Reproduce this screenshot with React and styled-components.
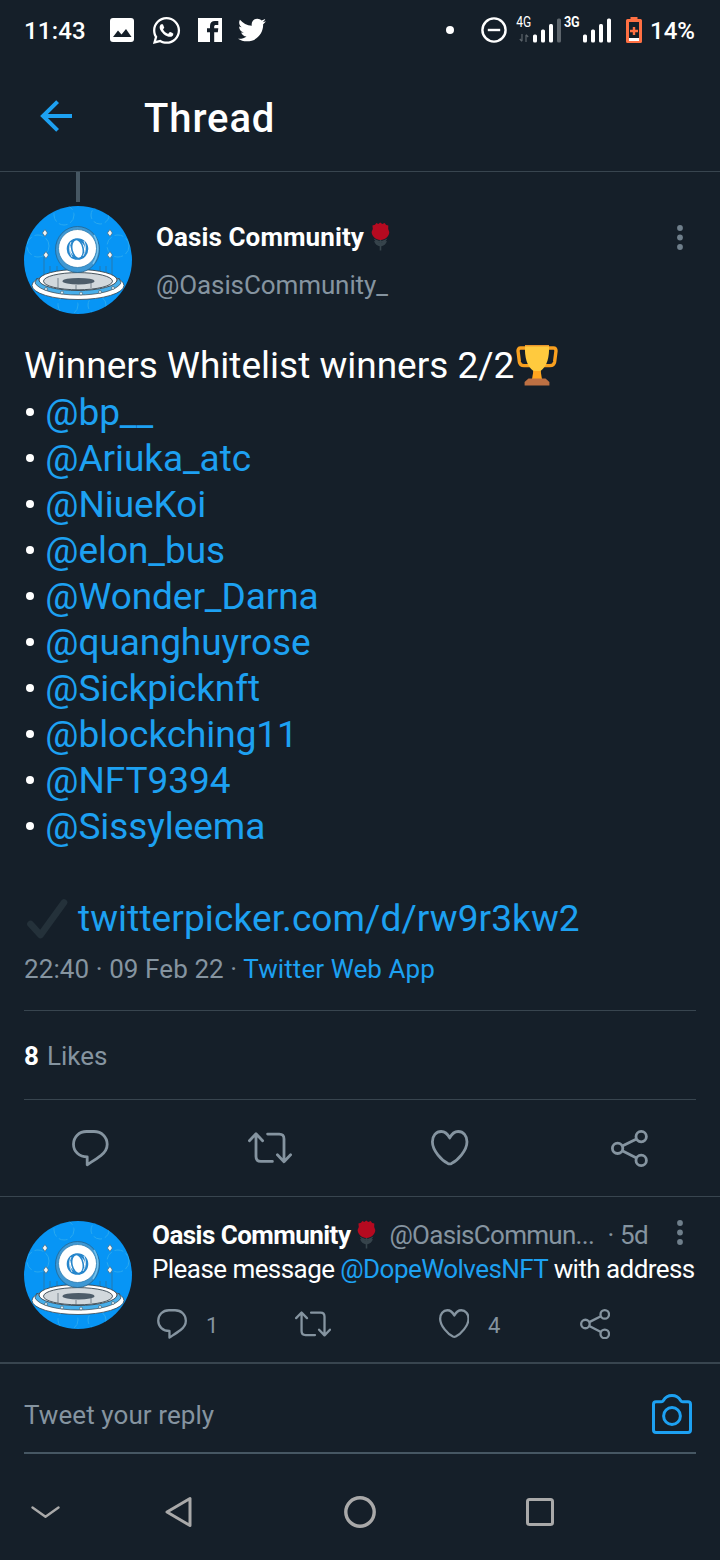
import React from 'react';
import styled, { createGlobalStyle } from 'styled-components';
import { FaTwitter, FaWhatsapp } from 'react-icons/fa';

const GlobalStyle = createGlobalStyle`
  :root {
    --bg: #151f29;
    --white: #ffffff;
    --slate: #8594a0;
    --blue: #1da1f2;
    --line: #38454f;
  }

  * {
    box-sizing: border-box;
  }

  body {
    margin: 0;
    background: var(--bg);
    color: var(--white);
    font-family: Roboto, 'Noto Sans', sans-serif;
  }

  svg {
    display: block;
    flex-shrink: 0;
  }
`;

const Screen = styled.div`
  display: flex;
  flex-direction: column;
  width: 720px;
  height: 1560px;
  overflow: hidden;
`;

const StatusBar = styled.header`
  display: flex;
  align-items: center;
  height: 60px;
  padding: 0 24px;
  font-size: 24px;
  font-weight: 500;

  .clock {
    width: 84px;
    padding-top: 1px;
    letter-spacing: 0.2px;
  }

  .battery {
    margin: 0 8px 0 15px;
  }

  .percent {
    width: 46px;
    padding-top: 1px;
    white-space: nowrap;
  }
`;

const StatusApps = styled.div`
  display: flex;
  align-items: center;
  flex: 1;

  svg + svg {
    margin-left: 16px;
  }

  svg:nth-child(2) {
    margin-left: 15px;
  }
`;

const Dot = styled.span`
  width: 8px;
  height: 8px;
  margin-right: 27px;
  border-radius: 50%;
  background: var(--white);
`;

const Network = styled.div`
  display: flex;
  height: 28px;
  margin-left: ${({ $gap }) => $gap}px;

  .label {
    display: flex;
    flex-direction: column;
    justify-content: space-between;
    align-items: center;
    width: ${({ $bold }) => ($bold ? 20 : 18)}px;
    padding-bottom: 2px;
  }

  .label span {
    margin: -1px ${({ $bold }) => ($bold ? 2 : 0)}px 0 0;
    font-size: 14px;
    line-height: 14px;
    font-weight: ${({ $bold }) => ($bold ? 700 : 400)};
    transform: scaleX(${({ $bold }) => ($bold ? 0.9 : 0.86)});
  }
`;

const TopBar = styled.div`
  display: flex;
  align-items: center;
  height: 112px;
  padding: 4px 40px 0;
  border-bottom: 1px solid var(--line);

  h1 {
    margin: 2px 0 0 72px;
    font-size: 40px;
    font-weight: 500;
    line-height: 48px;
    letter-spacing: 0.9px;
  }

  svg {
    margin-top: -4px;
  }
`;

const Connector = styled.div`
  width: 4px;
  height: 30px;
  margin-left: 76px;
  background: #465763;
`;

const Author = styled.div`
  display: flex;
  height: 108px;
  margin: 4px 24px 0;

  .names {
    flex: 1;
    padding: 15px 0 0 24px;
  }

  .more {
    margin: 19px 13px 0 0;
  }
`;

const Name = styled.div`
  display: flex;
  align-items: center;
  color: var(--white);
  font-size: 26px;
  font-weight: 700;
  line-height: 32px;
  letter-spacing: ${({ $spacing }) => $spacing || 0}px;
  white-space: nowrap;
`;

const Handle = styled.div`
  margin-top: 16px;
  color: var(--slate);
  font-size: 26px;
  line-height: 32px;
  letter-spacing: -0.1px;
`;

const Tweet = styled.div`
  margin: 29px 24px 0;
  font-size: 37px;
  line-height: 46px;

  .title {
    display: flex;
    height: 47px;
  }

  ul {
    margin: 0;
    padding: 0;
    list-style: none;
  }

  li {
    display: flex;
    align-items: center;
    height: 46px;
    letter-spacing: -0.07px;
  }

  li::before {
    content: '';
    width: 8px;
    height: 8px;
    margin: -3px 11.3px 0 2px;
    border-radius: 50%;
    background: var(--white);
  }

  .picker {
    display: flex;
    align-items: center;
    gap: 9px;
    height: 46px;
    margin-top: 46px;
    letter-spacing: 0.1px;
  }
`;

const Link = styled.a`
  color: var(--blue);
  text-decoration: none;
`;

const Meta = styled.div`
  height: 61px;
  margin: 8px 24px 0;
  padding-top: 3px;
  border-bottom: 1px solid var(--line);
  color: var(--slate);
  font-size: 26px;
  line-height: 32px;
  letter-spacing: 0.09px;
`;

const Likes = styled.div`
  height: 89px;
  margin: 0 24px;
  border-bottom: 1px solid var(--line);
  color: var(--slate);
  font-size: 26px;
  line-height: 90px;

  b {
    margin-right: 8px;
    color: var(--white);
  }
`;

const Actions = styled.div`
  display: grid;
  grid-template-columns: repeat(4, 1fr);
  place-items: center;
  height: 97px;
  border-bottom: 1px solid var(--line);
  color: var(--slate);

  svg:last-child {
    margin-right: 2px;
  }
`;

const Reply = styled.article`
  display: flex;
  height: 167px;
  padding: 24px 24px 0;
  border-bottom: 2px solid var(--line);

  .content {
    flex: 1;
    min-width: 0;
    padding-left: 20px;
  }

  .head {
    display: flex;
    height: 30px;
    margin-top: -1px;
    color: var(--slate);
    font-size: 26px;
    line-height: 30px;
    white-space: nowrap;
  }

  .user {
    width: 218px;
    margin-left: 13px;
    letter-spacing: -0.7px;
  }

  .time {
    letter-spacing: -0.4px;
  }

  .more {
    margin: 0 13px 0 auto;
  }

  p {
    margin: 3px 0 0;
    font-size: 26px;
    line-height: 32px;
    white-space: nowrap;
    letter-spacing: -0.56px;
  }
`;

const ReplyActions = styled.div`
  display: flex;
  margin-top: 20px;
  padding-left: 1px;
  color: var(--slate);
  font-size: 22px;
`;

const ReplyAction = styled.div`
  display: flex;
  align-items: center;
  flex: 0 0 141px;
  height: 38px;

  .icon {
    display: flex;
    justify-content: center;
    width: 38px;
    margin-right: 15px;
  }

  .count {
    padding-top: 2px;
  }
`;

const Composer = styled.div`
  display: flex;
  justify-content: space-between;
  align-items: center;
  height: 90px;
  margin: 0 24px;
  border-bottom: 2px solid #465763;
  color: var(--slate);
  font-size: 26px;
  letter-spacing: 0.08px;

  span {
    padding-top: 13px;
  }

  svg {
    margin: 11px 4px 0 0;
  }
`;

const NavBar = styled.nav`
  display: grid;
  grid-template-columns: 90px repeat(3, 180px) 90px;
  place-items: center;
  flex: 1;
  padding-top: 10px;
  color: #a9a9a9;
`;

const Svg = ({ w, h, box, stroke = 2.8, children, ...rest }) => (
  <svg
    width={w}
    height={h}
    viewBox={box || `0 0 ${w} ${h}`}
    fill="none"
    stroke="currentColor"
    strokeWidth={stroke}
    {...rest}>
    {children}
  </svg>
);

const CommentIcon = ({ size = 1 }) => (
  <Svg w={37 * size} h={37 * size} box="0 0 37 37" strokeLinejoin="round">
    <path d="M14.5 1.5H22C29.6 1.5 35.2 7 35.2 14.3C35.2 19.5 32.8 22.6 28.8 25.6C24.4 28.9 19.4 32 15.2 34.8V26.8C7.2 26.8 1.5 21.5 1.5 14.3C1.5 7 7 1.5 14.5 1.5Z" />
  </Svg>
);

const RetweetIcon = ({ size = 1 }) => (
  <Svg w={44 * size} h={32 * size} box="0 0 44 32" strokeLinecap="round" strokeLinejoin="round">
    <path d="M1.4 8.7L8 1.8L14.6 8.7M8 2V24.5Q8 29.4 12.8 29.4H24.4" />
    <path d="M29.4 22.8L36 29.7L42.6 22.8M36 29.5V7Q36 2.1 31.2 2.1H19.6" />
  </Svg>
);

const HeartIcon = ({ size = 1 }) => (
  <Svg w={37.4 * size} h={35.4 * size} box="0 0 37.4 35.4" strokeLinejoin="round">
    <path d="M18.7 8C16.6 3.8 13.6 1.5 10.2 1.5C5 1.5 1.4 6 1.4 11.8C1.4 20.6 10.8 30.6 17 33.6Q18.7 34.3 20.4 33.6C26.6 30.6 36 20.6 36 11.8C36 6 32.4 1.5 27.2 1.5C23.8 1.5 20.8 3.8 18.7 8Z" />
  </Svg>
);

const ShareIcon = ({ size = 1 }) => (
  <Svg w={37 * size} h={37 * size} box="0 0 37 37">
    <circle cx="6.6" cy="18.3" r="5.2" />
    <circle cx="30.2" cy="6.6" r="5.2" />
    <circle cx="30.2" cy="30.4" r="5.2" />
    <path d="M11.3 16L25.5 8.9M11.3 20.7L25.5 28" />
  </Svg>
);

const MoreIcon = () => (
  <Svg w={6} h={26} stroke={0} className="more">
    {[3, 12.5, 22].map(cy => (
      <circle key={cy} cx="3" cy={cy} r="2.9" fill="#6f7f8b" />
    ))}
  </Svg>
);

const RoseSvg = styled.svg`
  margin: -1px 0 0 7px;
`;

const Rose = () => (
  <RoseSvg width="19" height="29" viewBox="0 0 19 29">
    <path d="M8.7 17H10.3V28.5H8.7ZM9.5 24.5C6 24 4 22 3 19L9.5 20.5L16 19C15 22 13 24 9.5 24.5ZM2.5 16.5L9.5 19.5L16.5 16.5L14 20H5Z" fill="#36434b" />
    <path d="M1.4 3.4L4 2.8L5.4 1L7.3 2L9.2 0.4L11.3 2L13.6 1L15.2 3L17.3 3.6L17.2 7L18.3 10C18.2 14 14.5 18 9.5 18S0.8 14 0.6 10L1.8 7Z" fill="#b50a20" />
  </RoseSvg>
);

const TrophySvg = styled.svg`
  margin: 1px 0 0 2px;
`;

const Trophy = () => (
  <TrophySvg width="42" height="42" viewBox="0 0 42 42">
    <path d="M10 4H4.5Q2 4 2 7L3.4 18Q4 21.6 8 21.6H14M32 4H37.5Q40 4 40 7L38.6 18Q38 21.6 34 21.6H28" fill="none" stroke="#f9a01f" strokeWidth="3.4" />
    <path d="M9 1H33C33.6 14 31 22 24.6 27V35H17.4V27C11 22 8.4 14 9 1Z" fill="#ffca3e" />
    <path d="M17.4 27H24.6L26 35H16Z" fill="#ffa51f" />
    <path d="M9 1H33V2.4H9Z" fill="#e9962c" />
    <path d="M12.5 34.5H29.5L33.4 38V41.5H8.6V38Z" fill="#bd7043" />
  </TrophySvg>
);

const Check = () => (
  <svg width="45" height="42" viewBox="0 0 45 42">
    <path d="M6.5 26L16.5 37L40 4.5" fill="none" stroke="#24313a" strokeWidth="6.6" strokeLinecap="round" strokeLinejoin="round" />
  </svg>
);

const Sparkle = ({ x, y }) => (
  <path d={`M${x} ${y - 3.4}L${x + 2.4} ${y}L${x} ${y + 3.4}L${x - 2.6} ${y}Z`} fill="#eef5f8" stroke="#46555f" strokeWidth="0.6" />
);

const Avatar = () => (
  <svg width="108" height="108" viewBox="0 0 108 108">
    <defs>
      <clipPath id="avatar-clip">
        <circle cx="54" cy="54" r="54" />
      </clipPath>
    </defs>
    <g clipPath="url(#avatar-clip)">
      <rect width="108" height="108" fill="#0795f5" />
      <g fill="none" stroke="#2aa9ef" strokeWidth="1" strokeDasharray="9 3">
        <circle cx="40" cy="9" r="10" />
        <circle cx="76" cy="9" r="9" />
        <circle cx="14" cy="40" r="11" />
        <circle cx="94" cy="40" r="11" />
        <circle cx="44" cy="99" r="10" />
        <circle cx="73" cy="99" r="9" />
      </g>
      <path d="M20 51V73M88 51V73M26 60V72M82 60V72M76 60V70M33 60V70" stroke="#336d93" strokeWidth="0.7" />
      <ellipse cx="54" cy="79.5" rx="46" ry="14" fill="#fff" stroke="#36444e" strokeWidth="0.8" />
      <path d="M11 77C20 93 88 93 97 77L95 72C86 87 22 87 13 72Z" fill="#47aeea" stroke="#36444e" strokeWidth="0.7" />
      <ellipse cx="54" cy="74" rx="39" ry="10.5" fill="#fff" stroke="#36444e" strokeWidth="0.9" />
      <ellipse cx="54" cy="75.2" rx="34.5" ry="8.6" fill="#d2d8dc" stroke="#36444e" strokeWidth="0.9" />
      <path d="M34 72V82M52 79V84M67 76V82" stroke="#54626d" strokeWidth="0.7" />
      <ellipse cx="54.5" cy="75.2" rx="16" ry="3.3" fill="#4d5c69" />
      <g fill="#d7eefa" stroke="#36444e" strokeWidth="0.5">
        <circle cx="22" cy="83" r="1.5" />
        <circle cx="38" cy="86.5" r="1.5" />
        <circle cx="57" cy="87.5" r="1.5" />
        <circle cx="76" cy="86" r="1.5" />
        <circle cx="89" cy="82" r="1.5" />
      </g>
      <ellipse cx="53.5" cy="43.5" rx="22" ry="23" fill="#3e98d4" stroke="#24648f" strokeWidth="0.8" />
      <path d="M70 29Q78 43 69 58" fill="none" stroke="#75c2ed" strokeWidth="1.6" />
      <circle cx="53.5" cy="42.5" r="19" fill="#fff" stroke="#307cb0" strokeWidth="0.8" />
      <circle cx="53.5" cy="43" r="9.2" fill="none" stroke="#2686cc" strokeWidth="3.2" />
      <ellipse cx="53.5" cy="43" rx="5.6" ry="9.6" fill="#fff" stroke="#2686cc" strokeWidth="1.6" transform="rotate(-12 53.5 43)" />
      <path d="M47 36Q43.5 43 48 51M60 35Q63.5 43 59 50" fill="none" stroke="#fff" strokeWidth="0.8" />
      <Sparkle x={21} y={27} />
      <Sparkle x={86} y={27} />
      <Sparkle x={22} y={49} />
      <Sparkle x={86} y={49} />
    </g>
  </svg>
);

const Bars = ({ dimLast }) => (
  <svg width="28" height="28" viewBox="0 0 28 28">
    {[8, 13, 18.5, 24].map((h, i) => (
      <rect
        key={h}
        x={i * 8}
        y={26.5 - h}
        width="4"
        height={h}
        rx="1.5"
        fill={dimLast && i === 3 ? '#5d656c' : '#fff'}
      />
    ))}
  </svg>
);

const handles = [
  '@bp__',
  '@Ariuka_atc',
  '@NiueKoi',
  '@elon_bus',
  '@Wonder_Darna',
  '@quanghuyrose',
  '@Sickpicknft',
  '@blockching11',
  '@NFT9394',
  '@Sissyleema',
];

const replyActions = [
  { Icon: CommentIcon, count: 1 },
  { Icon: RetweetIcon },
  { Icon: HeartIcon, count: 4 },
  { Icon: ShareIcon },
];

const App = () => (
  <Screen>
    <GlobalStyle />
    <StatusBar>
      <span className="clock">11:43</span>
      <StatusApps>
        <svg width="28" height="24" viewBox="0 0 28 24">
          <rect x="2" width="24" height="24" rx="3" fill="#fff" />
          <path d="M5 19L10 12.5L13.5 16.5L18 11L23.5 19Z" fill="#151f29" />
        </svg>
        <FaWhatsapp size={31} />
        <svg width="24" height="24" viewBox="0 0 24 24">
          <path d="M0 0H24V24H0Z" fill="#fff" />
          <path d="M12 24V14.2H9V10.2H12V8C12 4.8 13.8 3 17 3H20.3V6.9H18C16.7 6.9 16.2 7.4 16.2 8.6V10.2H20.3L19.8 14.2H16.2V24Z" fill="#151f29" />
        </svg>
        <FaTwitter size={28} />
      </StatusApps>
      <Dot />
      <Svg w={26} h={26} stroke={2.4}>
        <circle cx="13" cy="13" r="11.6" />
        <path d="M6.8 13H19.2" />
      </Svg>
      <Network $gap={8}>
        <div className="label">
          <span>4G</span>
          <Svg w={10} h={8} stroke={1.2} color="#5d656c">
            <path d="M3 0V7M0.8 5L3 7.4M7 8V1M7 0.6L9.2 3" />
          </Svg>
        </div>
        <Bars dimLast />
      </Network>
      <Network $gap={2} $bold>
        <div className="label">
          <span>3G</span>
        </div>
        <Bars />
      </Network>
      <svg className="battery" width="16" height="26" viewBox="0 0 16 26">
        <path d="M4.5 0H11.5V2H14.5Q16 2 16 3.5V24.5Q16 26 14.5 26H1.5Q0 26 0 24.5V3.5Q0 2 1.5 2H4.5Z" fill="#ff7043" />
        <rect x="3" y="5" width="10" height="18" fill="#151f29" />
        <path d="M8 10V18M4 14H12" stroke="#ff7043" strokeWidth="2.4" />
        <rect x="3" y="21" width="10" height="3" fill="#fff" />
      </svg>
      <span className="percent">14%</span>
    </StatusBar>

    <TopBar>
      <Svg w={32} h={32} stroke={4} color="#1da1f2">
        <path d="M32 16H3M17.6 1.6L3 16L17.6 30.4" />
      </Svg>
      <h1>Thread</h1>
    </TopBar>

    <Connector />
    <Author>
      <Avatar />
      <div className="names">
        <Name $spacing={0.1}>
          Oasis Community
          <Rose />
        </Name>
        <Handle>@OasisCommunity_</Handle>
      </div>
      <MoreIcon />
    </Author>

    <Tweet>
      <div className="title">
        Winners Whitelist winners 2/2
        <Trophy />
      </div>
      <ul>
        {handles.map(handle => (
          <li key={handle}>
            <Link>{handle}</Link>
          </li>
        ))}
      </ul>
      <div className="picker">
        <Check />
        <Link>twitterpicker.com/d/rw9r3kw2</Link>
      </div>
    </Tweet>

    <Meta>
      22:40 · 09 Feb 22 · <Link>Twitter Web App</Link>
    </Meta>
    <Likes>
      <b>8</b>
      Likes
    </Likes>
    <Actions>
      <CommentIcon />
      <RetweetIcon />
      <HeartIcon />
      <ShareIcon />
    </Actions>

    <Reply>
      <Avatar />
      <div className="content">
        <div className="head">
          <Name $spacing={-0.54}>
            Oasis Community
            <Rose />
          </Name>
          <span className="user">@OasisCommun...</span>
          <span className="time">· 5d</span>
          <MoreIcon />
        </div>
        <p>
          Please message <Link>@DopeWolvesNFT</Link> with address
        </p>
        <ReplyActions>
          {replyActions.map(({ Icon, count }, i) => (
            <ReplyAction key={i}>
              <span className="icon">
                <Icon size={0.82} />
              </span>
              {count && <span className="count">{count}</span>}
            </ReplyAction>
          ))}
        </ReplyActions>
      </div>
    </Reply>

    <Composer>
      <span>Tweet your reply</span>
      <Svg w={40} h={40} stroke={3} color="#1da1f2" strokeLinejoin="round">
        <path d="M4 7.8H9.2Q10.6 7.8 11.4 6.4C13.4 3 16 1.5 20 1.5S26.6 3 28.6 6.4Q29.4 7.8 30.8 7.8H36Q38.5 7.8 38.5 10.3V36Q38.5 38.5 36 38.5H4Q1.5 38.5 1.5 36V10.3Q1.5 7.8 4 7.8Z" />
        <circle cx="20" cy="22" r="8.4" />
      </Svg>
    </Composer>

    <NavBar>
      <Svg w={29} h={13} stroke={2.4} strokeLinecap="round" strokeLinejoin="round">
        <path d="M1.5 1.5L14.5 10.8L27.5 1.5" />
      </Svg>
      <Svg w={30} h={32} stroke={3} strokeLinejoin="round">
        <path d="M25 2.5V29.5L2 16Z" />
      </Svg>
      <Svg w={32} h={32} stroke={3.4}>
        <circle cx="16" cy="16" r="14.2" />
      </Svg>
      <Svg w={28} h={28} stroke={3}>
        <rect x="1.5" y="1.5" width="25" height="25" rx="2" />
      </Svg>
    </NavBar>
  </Screen>
);

export default App;
